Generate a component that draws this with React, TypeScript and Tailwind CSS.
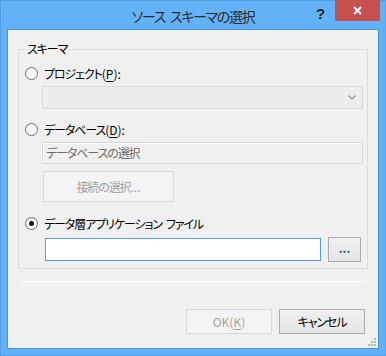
import React from "react";

function Radio({ checked = false }: { checked?: boolean }) {
  return (
    <span className="flex h-[13px] w-[13px] shrink-0 items-center justify-center rounded-full border border-[#6f6f6f] bg-gradient-to-b from-[#f2f2f2] to-[#ffffff]">
      {checked && <span className="h-[5px] w-[5px] rounded-full bg-[#1a1a1a]" />}
    </span>
  );
}

function Accel({ pre = "(", ch, post }: { pre?: string; ch: string; post: string }) {
  return (
    <span className="tracking-normal">
      {pre}
      <span className="underline underline-offset-2">{ch}</span>
      {post}
    </span>
  );
}

export default function App() {
  return (
    <div className="relative flex h-[356px] w-[386px] flex-col border border-[#4f9ee6] bg-[#63b1f6] px-[6px] pb-[6px] font-['Noto_Sans_CJK_JP',sans-serif] text-[12px] leading-none tracking-[-1.1px] text-black [font-feature-settings:'palt']">
      {/* title bar */}
      <div className="flex h-[28px] shrink-0 items-center justify-center pt-[2px]">
        <span className="text-[14px] tracking-[-1.3px] text-[#2b2b2b]">
          ソース<span className="inline-block w-[5px]" />スキーマの選択
        </span>
      </div>
      <span className="absolute left-[315px] top-[5px] font-['Liberation_Sans',sans-serif] text-[15px] font-bold tracking-normal text-[#1f1f1f]">
        ?
      </span>
      <div className="absolute right-[5px] top-[-1px] flex h-[21px] w-[45px] items-center justify-center bg-[#c75050]">
        <svg width="9" height="9" viewBox="0 0 9 9">
          <path d="M1 1L8 8M8 1L1 8" stroke="#fff" strokeWidth="2" />
        </svg>
      </div>

      {/* client area */}
      <div className="relative flex flex-1 flex-col border border-[#4a94d8] bg-[#f0f0f0]">
        <fieldset className="mx-[10px] mt-[11px] flex flex-col border border-[#dcdcdc] pb-[6px] pr-[4px]">
          <legend className="ml-[7px] px-[1px] leading-[16px]">スキーマ</legend>

          <div className="mt-[6px] flex h-[21px] items-center pl-[6px]">
            <Radio />
            <span className="ml-[6px]">
              プロジェクト<Accel ch="P" post="):" />
            </span>
          </div>
          <div className="ml-[23px] mt-[2px] flex h-[23px] items-center justify-end border border-[#d9d9d9] bg-[#ededed] pr-[6px]">
            <svg width="8" height="5" viewBox="0 0 8 5">
              <path d="M0.5 0.5L4 4L7.5 0.5" stroke="#a6a6a6" strokeWidth="1.6" fill="none" />
            </svg>
          </div>

          <div className="mt-[10px] flex h-[21px] items-center pl-[6px]">
            <Radio />
            <span className="ml-[6px]">
              データベース<Accel ch="D" post="):" />
            </span>
          </div>
          <div className="ml-[23px] mt-[2px] flex h-[22px] items-center border border-[#d9d9d9] bg-[#f0f0f0] pl-[3px] text-[#6d6d6d] shadow-[inset_0_1px_0_#fff,inset_1px_0_0_#fff]">
            データベースの選択
          </div>
          <div className="ml-[24px] mt-[7px] flex h-[31px] w-[131px] items-center justify-center border border-[#dadada] bg-[#f4f4f4] text-[#a3a3a3]">
            接続の選択<span className="tracking-normal">...</span>
          </div>

          <div className="mt-[11px] flex h-[21px] items-center pl-[6px]">
            <Radio checked />
            <span className="ml-[6px]">
              データ層アプリケーション<span className="inline-block w-[4px]" />ファイル
            </span>
          </div>
          <div className="mt-[3px] flex h-[25px] items-center pr-[2px]">
            <div className="ml-[26px] h-[23px] flex-1 border border-[#569de5] bg-white" />
            <div className="ml-[7px] flex h-[25px] w-[33px] items-end justify-center border border-[#acacac] bg-gradient-to-b from-[#f0f0f0] to-[#e5e5e5] pb-[7px] font-bold tracking-normal text-[#1a5a9a]">
              ...
            </div>
          </div>
        </fieldset>

        <div className="ml-[13px] mr-[12px] mt-[12px] h-px bg-[#fcfcfc]" />

        <div className="mr-[13px] mt-[27px] flex justify-end gap-[7px]">
          <div className="flex h-[25px] w-[86px] items-center justify-center border border-[#d9d9d9] bg-[#f4f4f4] text-[#a3a3a3]">
            <Accel pre="OK(" ch="K" post=")" />
          </div>
          <div className="flex h-[25px] w-[86px] items-center justify-center border border-[#adadad] bg-gradient-to-b from-[#f0f0f0] to-[#e5e5e5]">
            キャンセル
          </div>
        </div>

        <svg className="absolute bottom-[2px] right-[2px]" width="8" height="8" viewBox="0 0 8 8">
          <rect x="6" y="0" width="2" height="2" fill="#b8b8b8" />
          <rect x="3" y="3" width="2" height="2" fill="#b8b8b8" />
          <rect x="6" y="3" width="2" height="2" fill="#b8b8b8" />
          <rect x="0" y="6" width="2" height="2" fill="#b8b8b8" />
          <rect x="3" y="6" width="2" height="2" fill="#b8b8b8" />
          <rect x="6" y="6" width="2" height="2" fill="#b8b8b8" />
        </svg>
      </div>
    </div>
  );
}
